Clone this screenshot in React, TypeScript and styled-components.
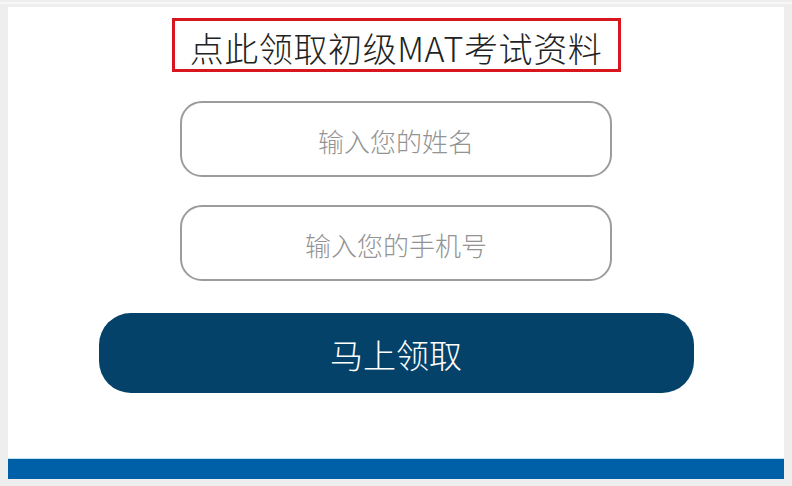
import React from "react";
import styled, { createGlobalStyle } from "styled-components";

const Global = createGlobalStyle`
  html, body { margin: 0; padding: 0; background: #eeeeee; }
  body { font-family: "Noto Sans CJK SC", "Noto Sans", sans-serif; }
  * { box-sizing: border-box; }
`;

const Page = styled.div`
  width: 792px;
  height: 486px;
  overflow: hidden;
  padding: 7px 8px 0 8px;
  background: linear-gradient(#eeeeee 0 2px, #f7f7f7 2px 4px, #eeeeee 4px);
`;

const Panel = styled.div`
  background: #ffffff;
  display: flex;
  flex-direction: column;
  align-items: center;
`;

const TitleBox = styled.div`
  margin-top: 11px;
  width: 449px;
  height: 54px;
  border: 3px solid #d8161d;
  display: flex;
  align-items: center;
  justify-content: center;
  font-size: 34px;
  font-weight: 300;
  letter-spacing: 0.6px;
  color: #222222;
  line-height: 1;
  padding-top: 5px;
`;

const Form = styled.div`
  margin-top: 29px;
  display: flex;
  flex-direction: column;
  gap: 28px;
`;

const Field = styled.input`
  width: 432px;
  height: 76px;
  border: 2px solid #9c9c9c;
  border-radius: 22px;
  background: #fff;
  text-align: center;
  font-family: "Noto Sans CJK SC", "Noto Sans", sans-serif;
  font-size: 26px;
  font-weight: 300;
  color: #555;
  outline: none;
  padding: 2px 0 0 0;
  &::placeholder { color: #939393; }
`;

const Submit = styled.button`
  margin-top: 32px;
  width: 595px;
  height: 80px;
  border: none;
  border-radius: 32px;
  background: #04426a;
  color: #ffffff;
  font-family: "Noto Sans CJK SC", "Noto Sans", sans-serif;
  font-size: 33px;
  font-weight: 300;
  padding: 2px 0 0 0;
  cursor: pointer;
`;

const Bar = styled.div`
  margin-top: 65px;
  align-self: stretch;
  height: 21px;
  background: #0060a7;
  border-top: 1px solid #bfe3ef;
`;

export default function App() {
  return (
    <>
      <Global />
      <Page>
        <Panel>
          <TitleBox>点此领取初级MAT考试资料</TitleBox>
          <Form>
            <Field placeholder="输入您的姓名" />
            <Field placeholder="输入您的手机号" />
          </Form>
          <Submit>马上领取</Submit>
          <Bar />
        </Panel>
      </Page>
    </>
  );
}
